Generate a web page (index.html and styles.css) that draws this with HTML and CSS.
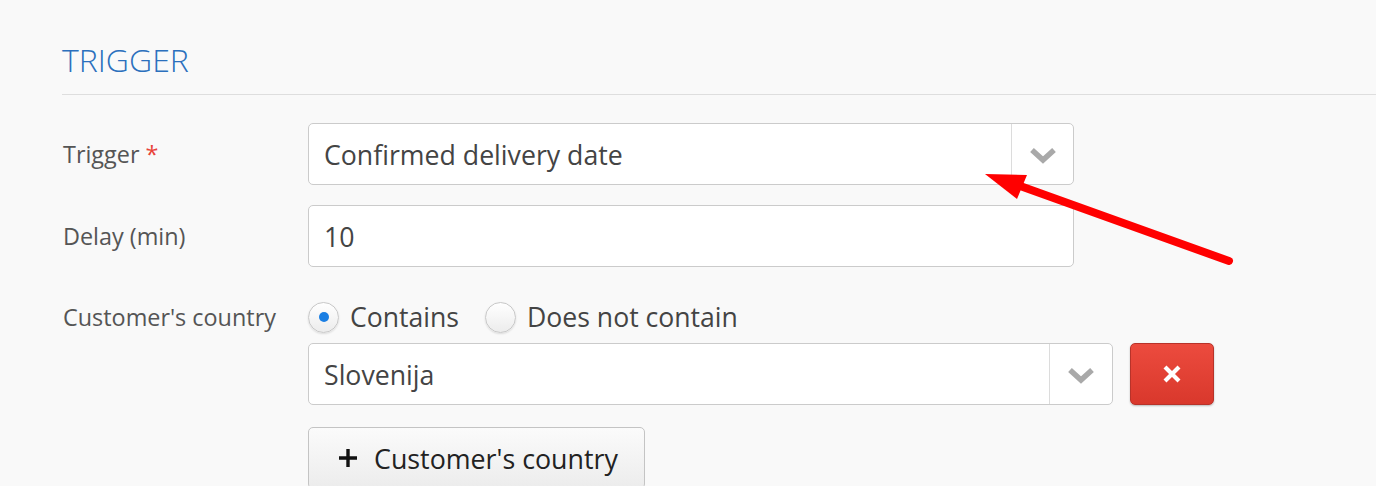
FILE: index.html
```html
<!DOCTYPE html>
<html lang="en">
<head>
<meta charset="utf-8">
<title>Trigger</title>
<link rel="stylesheet" href="styles.css">
</head>
<body>
<div class="page">
  <h2 class="section-title">TRIGGER</h2>

  <div class="form-row">
    <label class="label">Trigger <span class="req">*</span></label>
    <div class="control">
      <div class="select select-wide">
        <span class="value">Confirmed delivery date</span>
        <span class="caret"><svg width="28" height="18" viewBox="0 0 28 18"><path d="M3 4 L14 14 L25 4" fill="none" stroke="#a9a9a9" stroke-width="5.5"/></svg></span>
      </div>
    </div>
  </div>

  <div class="form-row row-gap">
    <label class="label">Delay (min)</label>
    <div class="control">
      <div class="input select-wide">10</div>
    </div>
  </div>

  <div class="form-row row-top row-gap3">
    <label class="label label-top">Customer's country</label>
    <div class="control">
      <div class="radios">
        <span class="radio checked"></span><span class="radio-text">Contains</span>
        <span class="radio"></span><span class="radio-text">Does not contain</span>
      </div>
      <div class="select-line">
        <div class="select select-mid">
          <span class="value">Slovenija</span>
          <span class="caret caret2"><svg width="28" height="18" viewBox="0 0 28 18"><path d="M3 4 L14 14 L25 4" fill="none" stroke="#a9a9a9" stroke-width="5.5"/></svg></span>
        </div>
        <button class="btn-remove" type="button"><svg width="20" height="20" viewBox="0 0 20 20"><path d="M3 3 L17 17 M17 3 L3 17" stroke="#fff" stroke-width="4.2"/></svg></button>
      </div>
      <button class="btn-add" type="button"><svg class="plus" width="20" height="20" viewBox="0 0 20 20"><path d="M10 1 V19 M1 10 H19" stroke="#111" stroke-width="3.4"/></svg>Customer's country</button>
    </div>
  </div>
</div>

<svg class="arrow" width="1376" height="486" viewBox="0 0 1376 486">
  <line x1="1229" y1="261" x2="1012" y2="183" stroke="#ff0000" stroke-width="8" stroke-linecap="round"/>
  <polygon points="985,174 1027,175 1017,199" fill="#ff0000"/>
</svg>
</body>
</html>
```

FILE: styles.css
```css
html, body {
  margin: 0;
  padding: 0;
  background: #f9f9f9;
}
body {
  font-family: "Open Sans", "Noto Sans", sans-serif;
  color: #555;
  width: 1376px;
  height: 486px;
  overflow: hidden;
  position: relative;
}
.page {
  padding-left: 62px;
}
.section-title {
  margin: 40px 0 0 0;
  font-size: 32px;
  line-height: 40px;
  font-weight: 300;
  color: #2b70bd;
  padding-bottom: 14px;
  border-bottom: 1px solid #dedede;
}
.form-row {
  display: flex;
  align-items: center;
  margin-top: 28px;
}
.row-gap {
  margin-top: 20px;
}
.row-top {
  align-items: flex-start;
}
.row-gap3 {
  margin-top: 29px;
}
.label {
  width: 246px;
  flex: none;
  font-size: 23.4px;
  line-height: 32px;
  color: #555;
  padding-left: 1px;
  box-sizing: border-box;
}
.label-top {
  line-height: 42px;
}
.req {
  color: #e8433a;
}
.control {
  display: flex;
  flex-direction: column;
  align-items: flex-start;
}
.select, .input {
  height: 62px;
  box-sizing: border-box;
  border: 1px solid #cbcbcb;
  border-radius: 5px;
  background: #fff;
  display: flex;
  align-items: center;
  font-size: 26.7px;
  color: #444;
}
.select-wide {
  width: 766px;
}
.input {
  padding-left: 15px;
}
.select .value {
  flex: 1;
  padding-left: 15px;
}
.caret {
  width: 62px;
  height: 100%;
  border-left: 1px solid #dcdcdc;
  display: flex;
  align-items: center;
  justify-content: center;
  padding-top: 1px;
  box-sizing: border-box;
}
.caret2 {
  width: 63px;
}
.radios {
  display: flex;
  align-items: center;
  height: 42px;
}
.radio {
  width: 31px;
  height: 31px;
  box-sizing: border-box;
  border-radius: 50%;
  border: 1px solid #c8c8c8;
  background: linear-gradient(#ffffff, #ececec);
  box-shadow: 0 1px 2px rgba(0,0,0,0.12);
  display: flex;
  align-items: center;
  justify-content: center;
}
.radio.checked::after {
  content: "";
  width: 10px;
  height: 10px;
  border-radius: 50%;
  background: #1a7ee3;
}
.radio-text {
  font-size: 26.6px;
  color: #444;
  margin-left: 11px;
  margin-right: 26px;
}
.select-line {
  display: flex;
  align-items: flex-start;
  margin-top: 5px;
}
.select-mid {
  width: 805px;
}
.btn-remove {
  margin-left: 17px;
  width: 84px;
  height: 62px;
  border: 1px solid #b8332a;
  border-radius: 5px;
  background: linear-gradient(#ec4b3e, #d9382c);
  box-shadow: 0 1px 2px rgba(0,0,0,0.25);
  display: flex;
  align-items: center;
  justify-content: center;
  padding: 0;
}
.btn-add {
  margin-top: 22px;
  width: 337px;
  height: 62px;
  box-sizing: border-box;
  border: 1px solid #c4c4c4;
  border-radius: 5px;
  background: linear-gradient(#fbfbfb, #ececec);
  font-family: "Open Sans", "Noto Sans", sans-serif;
  font-size: 26.8px;
  color: #222;
  display: flex;
  align-items: center;
  padding: 0 0 0 29px;
}
.plus {
  margin-right: 16px;
}
.arrow {
  position: absolute;
  left: 0;
  top: 0;
  pointer-events: none;
}
```
